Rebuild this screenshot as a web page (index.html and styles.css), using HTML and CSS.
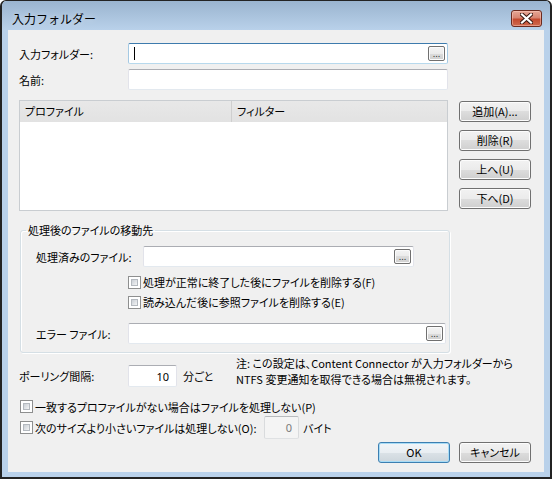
FILE: index.html
```html
<!DOCTYPE html>
<html lang="ja">
<head>
<meta charset="utf-8">
<title>入力フォルダー</title>
<link rel="stylesheet" href="styles.css">
</head>
<body>
<div class="window">
  <div class="titlebar">
    <span class="title">入力フォルダー</span>
    <button class="close" type="button" aria-label="閉じる">
      <svg width="13" height="11" viewBox="0 0 13 11">
        <path d="M2 1.5 L11 9.5 M11 1.5 L2 9.5" stroke="#3b1a14" stroke-width="4.2" stroke-linecap="square" fill="none"/>
        <path d="M2 1.5 L11 9.5 M11 1.5 L2 9.5" stroke="#ffffff" stroke-width="2.2" stroke-linecap="square" fill="none"/>
      </svg>
    </button>
  </div>

  <div class="client">
    <div class="field-row">
      <span class="lbl lbl-main">入力フォルダー:</span>
      <div class="textbox focused w-main"><span class="caret"></span><span class="browse">...</span></div>
    </div>
    <div class="field-row gap-top">
      <span class="lbl lbl-main">名前:</span>
      <div class="textbox w-main"></div>
    </div>

    <div class="list-section">
      <div class="listview">
        <div class="lv-header">
          <div class="lv-col col-profile">プロファイル</div>
          <div class="lv-col col-filter">フィルター</div>
        </div>
        <div class="lv-body"></div>
      </div>
      <div class="side-buttons">
        <button class="btn" type="button">追加(A)...</button>
        <button class="btn" type="button">削除(R)</button>
        <button class="btn" type="button">上へ(U)</button>
        <button class="btn" type="button">下へ(D)</button>
      </div>
    </div>

    <fieldset class="group">
      <legend>処理後のファイルの移動先</legend>
      <div class="field-row">
        <span class="lbl lbl-done">処理済みのファイル:</span>
        <div class="textbox w-done"><span></span><span class="browse">...</span></div>
      </div>
      <label class="check-row indent first">
        <span class="checkbox"></span><span>処理が正常に終了した後にファイルを削除する(F)</span>
      </label>
      <label class="check-row indent">
        <span class="checkbox"></span><span>読み込んだ後に参照ファイルを削除する(E)</span>
      </label>
      <div class="field-row error-row">
        <span class="lbl lbl-error">エラー ファイル:</span>
        <div class="textbox w-error"><span></span><span class="browse">...</span></div>
      </div>
    </fieldset>

    <div class="poll-row">
      <span class="lbl lbl-main poll-lbl">ポーリング間隔:</span>
      <div class="textbox num w-poll">10</div>
      <span class="unit">分ごと</span>
      <p class="note">注: この設定は、Content Connector が入力フォルダーから<br>NTFS 変更通知を取得できる場合は無視されます。</p>
    </div>

    <label class="check-row plain">
      <span class="checkbox"></span><span>一致するプロファイルがない場合はファイルを処理しない(P)</span>
    </label>
    <div class="size-row">
      <label class="check-row plain size-check">
        <span class="checkbox"></span><span>次のサイズより小さいファイルは処理しない(O):</span>
      </label>
      <div class="textbox num disabled w-size">0</div>
      <span class="unit">バイト</span>
    </div>

    <div class="dialog-buttons">
      <button class="btn default" type="button">OK</button>
      <button class="btn" type="button">キャンセル</button>
    </div>
  </div>
</div>
</body>
</html>
```

FILE: styles.css
```css
html, body {
  margin: 0;
  padding: 0;
  background: #ffffff;
}

body {
  font-family: "Noto Sans CJK JP", "Noto Sans", sans-serif;
  font-size: 11px;
  font-feature-settings: "palt";
  color: #000;
}

/* ---------- window frame ---------- */
.window {
  width: 552px;
  height: 479px;
  box-sizing: border-box;
  border-style: solid;
  border-color: #232323;
  border-width: 1px 2px 2px 2px;
  border-radius: 6px 6px 0 0;
  background: #b9d1ea;
  padding: 0 6px 5px 6px;
  display: flex;
  flex-direction: column;
  overflow: hidden;
}

.titlebar {
  height: 29px;
  flex: none;
  margin: 0 -6px;
  padding: 0 8px 0 10px;
  display: flex;
  justify-content: space-between;
  align-items: flex-start;
  background: linear-gradient(#9ab4cf, #b9d1ea);
  border-radius: 5px 5px 0 0;
}

.title {
  margin-top: 9px;
  font-size: 12px;
  line-height: 17px;
  font-feature-settings: normal;
  color: #000;
  text-shadow: 0 0 6px rgba(255, 255, 255, 0.6);
}

.close {
  margin-top: 9px;
  width: 31px;
  height: 17px;
  padding: 0;
  border: 1px solid #6b2a1f;
  border-radius: 3px;
  background: linear-gradient(#e6a796 0%, #d88572 45%, #c44a2f 55%, #cf6a4f 100%);
  box-shadow: inset 0 0 0 1px rgba(255, 210, 200, 0.45);
  display: flex;
  align-items: center;
  justify-content: center;
}

.close svg {
  display: block;
}

/* ---------- client area ---------- */
.client {
  flex: 1;
  background: #f0f0f0;
  padding: 13px 13px 0 11px;
  display: flex;
  flex-direction: column;
  min-height: 0;
}

.field-row {
  display: flex;
  align-items: center;
}

.gap-top {
  margin-top: 5px;
}

.lbl {
  flex: none;
  line-height: 16px;
  white-space: nowrap;
}

.lbl-main { width: 109px; }
.lbl-done { width: 107px; }
.lbl-error { width: 92px; }

/* ---------- text boxes ---------- */
.textbox {
  box-sizing: border-box;
  height: 21px;
  flex: none;
  background: #fff;
  border: 1px solid;
  border-color: #abadb3 #e2e3ea #e3e9ef #e2e3ea;
  border-radius: 2px;
  display: flex;
  align-items: center;
  justify-content: space-between;
  padding: 0 2px 0 5px;
}

.textbox.focused {
  border-color: #3d7bad #a4c9e3 #b7d9ed #a4c9e3;
}

.w-main { width: 320px; }
.w-done { width: 271px; }
.w-error { width: 318px; }
.w-poll { width: 49px; height: 22px; }
.w-size { width: 35px; height: 23px; }

.caret {
  width: 1px;
  height: 13px;
  background: #000;
}

.browse {
  box-sizing: border-box;
  width: 17px;
  height: 15px;
  border: 1px solid #707070;
  border-radius: 2px;
  background: linear-gradient(#f4f4f4 0%, #ebebeb 50%, #dcdcdc 50%, #cfcfcf 100%);
  box-shadow: inset 0 0 0 1px #fbfbfb;
  font-size: 8px;
  line-height: 15px;
  text-align: center;
  color: #222;
  letter-spacing: 0;
  font-family: "DejaVu Sans", sans-serif;
  font-feature-settings: normal;
}

.textbox.num {
  justify-content: flex-end;
  padding: 0 7px 0 2px;
  font-family: "Noto Sans", sans-serif;
  font-size: 11px;
}

.textbox.disabled {
  background: #f4f4f4;
  border-color: #b7babd #d9dbdd #dfe1e3 #d9dbdd;
  color: #7a7a7a;
  padding-right: 6px;
}

/* ---------- profile list ---------- */
.list-section {
  display: flex;
  margin-top: 10px;
  gap: 11px;
}

.listview {
  box-sizing: border-box;
  width: 429px;
  height: 111px;
  border: 1px solid #c9cdd1;
  background: #fff;
  display: flex;
  flex-direction: column;
}

.lv-header {
  height: 21px;
  flex: none;
  display: flex;
  background: linear-gradient(#e8e8e8, #e2e2e2);
}

.lv-col {
  box-sizing: border-box;
  line-height: 21px;
  padding-left: 5px;
}

.col-profile {
  width: 212px;
  border-right: 1px solid #cfcfcf;
}

.col-filter {
  flex: 1;
  padding-left: 5px;
}

.side-buttons {
  display: flex;
  flex-direction: column;
  gap: 8px;
  margin-top: 1px;
}

/* ---------- push buttons ---------- */
.btn {
  box-sizing: border-box;
  width: 72px;
  height: 21px;
  padding: 0;
  border: 1px solid #707070;
  border-radius: 3px;
  background: linear-gradient(#f2f2f2 0%, #ebebeb 50%, #dddddd 50%, #cfcfcf 100%);
  box-shadow: inset 0 0 0 1px #fcfcfc;
  font: inherit;
  font-feature-settings: "palt";
  line-height: 17px;
  color: #000;
  text-align: center;
}

.btn.default {
  border-color: #3c7fb1;
  background: linear-gradient(#f1f5f8 0%, #e9eef2 50%, #dbe2e7 50%, #cdd6dc 100%);
  box-shadow: inset 0 0 0 1px #a8dcf6;
}

/* ---------- group box ---------- */
.group {
  box-sizing: border-box;
  width: 430px;
  min-width: 0;
  margin: 11px 0 0 1px;
  padding: 8px 0 8px 15px;
  border: 1px solid #d5dfe5;
  border-radius: 3px;
  box-shadow: inset 1px 1px 0 #fff, 1px 1px 0 #fff;
}

.group legend {
  margin-left: -10px;
  padding: 0 2px;
  line-height: 16px;
}

.check-row {
  display: flex;
  align-items: center;
  height: 20px;
  gap: 2px;
  white-space: nowrap;
}

.check-row.indent {
  margin-left: 92px;
}

.check-row.first {
  margin-top: 5px;
}

.error-row {
  margin-top: 11px;
}

.checkbox {
  flex: none;
  box-sizing: border-box;
  width: 13px;
  height: 13px;
  border: 1px solid #8e8f8f;
  background: #fff;
  padding: 2px;
}

.checkbox::after {
  content: "";
  display: block;
  box-sizing: border-box;
  width: 100%;
  height: 100%;
  border: 1px solid #b4b9bf;
  background: linear-gradient(135deg, #cacfd5, #f3f4f5);
}

/* ---------- polling / options ---------- */
.poll-row {
  display: flex;
  align-items: center;
  margin-top: 12px;
  height: 22px;
}

.unit {
  flex: none;
  line-height: 16px;
  margin-left: 6px;
}

.poll-row .unit {
  width: 53px;
}

.note {
  margin: -10px 0 0 0;
  line-height: 16px;
  white-space: nowrap;
}

.check-row.plain {
  margin-left: 1px;
}

.poll-row + .check-row {
  margin-top: 10px;
  height: 19px;
}

.size-row {
  display: flex;
  align-items: center;
  height: 23px;
}

.size-check {
  width: 244px;
}

.size-row .unit {
  margin-left: 4px;
}

.dialog-buttons {
  display: flex;
  justify-content: flex-end;
  gap: 9px;
  margin-top: 3px;
}

.dialog-buttons .btn {
  height: 21px;
}
```
